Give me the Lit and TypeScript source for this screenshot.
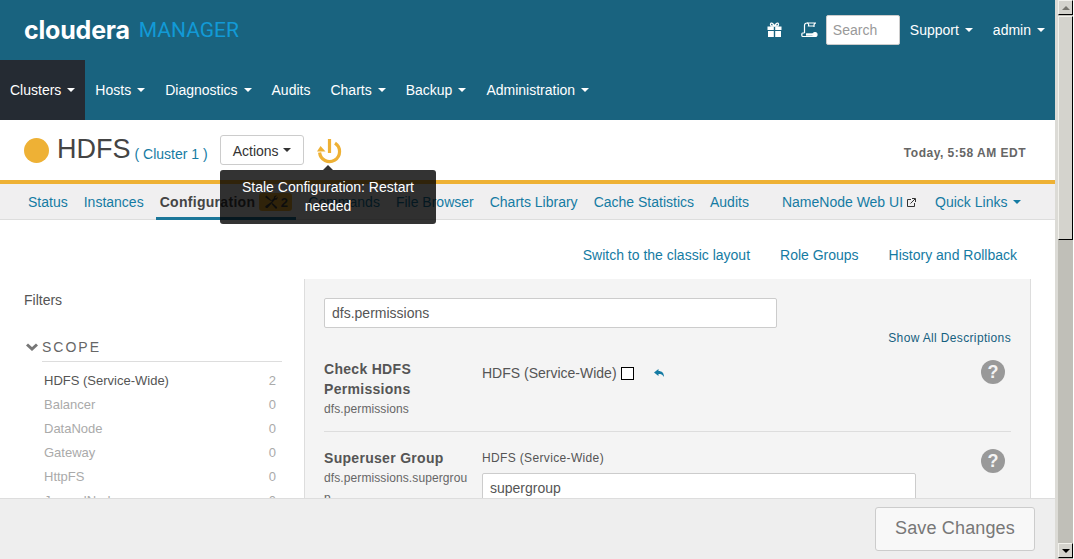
import { css, html, LitElement } from "lit";
import { customElement } from "lit/decorators.js";

const NAV = [
	{ label: "Clusters", caret: true, active: true },
	{ label: "Hosts", caret: true },
	{ label: "Diagnostics", caret: true },
	{ label: "Audits" },
	{ label: "Charts", caret: true },
	{ label: "Backup", caret: true },
	{ label: "Administration", caret: true },
];

const TABS = ["Commands", "File Browser", "Charts Library", "Cache Statistics", "Audits"];

const SCOPES = [
	["HDFS (Service-Wide)", "2"],
	["Balancer", "0"],
	["DataNode", "0"],
	["Gateway", "0"],
	["HttpFS", "0"],
	["JournalNode", "0"],
];

@customElement("app-root")
export class AppRoot extends LitElement {
	static override styles = css`
		:host {
			display: flex;
			height: 559px;
			overflow: hidden;
			font-family: "Liberation Sans", Arial, sans-serif;
			font-size: 14px;
			color: #555;
			background: #fff;
		}

		.page {
			flex: 1;
			min-width: 0;
			display: flex;
			flex-direction: column;
		}

		/* top header */
		.header {
			height: 120px;
			flex: none;
			background: #19637f;
			color: #fff;
			display: flex;
			flex-direction: column;
		}

		.brand-row {
			height: 60px;
			display: flex;
			align-items: center;
			padding: 0 10px 0 24px;
		}

		.logo {
			font-family: Inter, sans-serif;
			font-weight: 700;
			font-size: 25px;
			letter-spacing: -0.2px;
			color: #fff;
		}

		.logo-sub {
			font-family: Roboto, sans-serif;
			font-size: 21px;
			color: #129ad6;
			margin-left: 9px;
			letter-spacing: 0;
		}

		.util {
			margin-left: auto;
			display: flex;
			align-items: center;
		}

		.util svg {
			display: block;
		}

		.gift {
			margin-right: 19px;
		}

		.scroll-icon {
			margin-right: 8px;
		}

		.search {
			width: 74px;
			height: 30px;
			box-sizing: border-box;
			background: #fff;
			border: 1px solid #ccc;
			border-radius: 2px;
			padding: 0 6px;
			color: #999;
			display: flex;
			align-items: center;
			margin-right: 10px;
		}

		.util-link {
			display: flex;
			align-items: center;
		}

		.support {
			margin-right: 20px;
		}

		.caret {
			display: inline-block;
			width: 0;
			height: 0;
			margin-left: 6px;
			border-left: 4px solid transparent;
			border-right: 4px solid transparent;
			border-top: 4px solid currentColor;
		}

		.nav {
			height: 60px;
			display: flex;
		}

		.nav-item {
			padding: 0 10px;
			display: flex;
			align-items: center;
		}

		.nav-item.active {
			background: #252b33;
		}

		/* service title */
		.title-bar {
			height: 60px;
			flex: none;
			box-sizing: border-box;
			display: flex;
			align-items: center;
			padding: 0 29px 0 24px;
			position: relative;
		}

		.dot {
			width: 25px;
			height: 25px;
			border-radius: 50%;
			background: #eeb135;
			margin-right: 8px;
		}

		.service {
			font-size: 27px;
			color: #444;
			margin-right: 4px;
			margin-top: -2px;
		}

		.cluster {
			color: #157ba3;
			margin: 8px 12px 0 0;
		}

		.btn-actions {
			width: 84px;
			height: 30px;
			box-sizing: border-box;
			border: 1px solid #ccc;
			border-radius: 3px;
			background: #fff;
			color: #333;
			display: flex;
			align-items: center;
			justify-content: center;
			margin-right: 13px;
			padding-top: 2px;
		}

		.btn-actions .caret {
			margin-left: 4px;
			margin-top: -2px;
		}

		.power {
			display: block;
			margin-top: 3px;
		}

		.today {
			margin-left: auto;
			margin-top: 6px;
			font-size: 12px;
			font-weight: 700;
			color: #666;
			letter-spacing: 0.5px;
		}

		.tooltip {
			position: absolute;
			left: 220px;
			top: 50px;
			width: 216px;
			height: 54px;
			box-sizing: border-box;
			padding: 8px 16px;
			background: rgba(0, 0, 0, 0.8);
			border-radius: 3px;
			color: #fff;
			text-align: center;
			line-height: 19px;
			z-index: 5;
		}

		.tooltip::before {
			content: "";
			position: absolute;
			left: 103px;
			top: -5px;
			border-left: 5px solid transparent;
			border-right: 5px solid transparent;
			border-bottom: 5px solid rgba(0, 0, 0, 0.8);
		}

		/* tabs */
		.tabs {
			height: 40px;
			flex: none;
			box-sizing: border-box;
			border-top: 4px solid #eeb135;
			border-bottom: 1px solid #ddd;
			background: #f0eff0;
			display: flex;
			gap: 8px;
			padding-left: 24px;
			color: #157ba3;
		}

		.tab {
			padding: 0 4px;
			display: flex;
			align-items: center;
			box-sizing: border-box;
			height: 36px;
		}

		.tab.active {
			color: #444;
			font-weight: 700;
			letter-spacing: 0.3px;
			border-bottom: 3px solid #1b7699;
			padding-top: 3px;
		}

		.badge {
			margin-left: 4px;
			width: 33px;
			height: 18px;
			border-radius: 3px;
			background: #eeb135;
			color: #444;
			display: flex;
			align-items: center;
			justify-content: center;
			gap: 3px;
			font-size: 13px;
			letter-spacing: 0;
		}

		.tab-gap {
			margin-left: 17px;
		}

		.ext {
			margin-left: 4px;
			display: block;
		}

		.quick {
			margin-left: 3px;
		}

		/* body */
		.content {
			flex: 1;
			min-height: 0;
			overflow: hidden;
			display: flex;
			flex-direction: column;
		}

		.links {
			height: 59px;
			flex: none;
			display: flex;
			justify-content: flex-end;
			align-items: center;
			gap: 30px;
			padding: 10px 38px 0 0;
			box-sizing: border-box;
			color: #157ba3;
		}

		.columns {
			display: flex;
			padding-left: 24px;
		}

		.filters {
			width: 258px;
			margin-right: 22px;
			flex: none;
			padding-top: 12px;
		}

		.filters-title {
			color: #555;
			line-height: 18px;
		}

		.scope-head {
			margin-top: 26px;
			display: flex;
			align-items: center;
			height: 24px;
			color: #666;
			letter-spacing: 2px;
			font-size: 14px;
		}

		.scope-head svg {
			margin: 0 4px 0 2px;
		}

		.scope-list {
			margin-left: 18px;
			border-top: 1px solid #ddd;
			margin-top: 2px;
			padding: 6px 6px 0 2px;
		}

		.scope {
			height: 24px;
			display: flex;
			justify-content: space-between;
			align-items: center;
			font-size: 13px;
			color: #aaa;
		}

		.scope:first-child span:first-child {
			color: #555;
		}

		.panel {
			width: 727px;
			flex: none;
			box-sizing: border-box;
			background: #f4f4f4;
			border-left: 1px solid #ddd;
			border-right: 1px solid #ddd;
			padding: 19px 19px 0;
		}

		.input {
			height: 30px;
			box-sizing: border-box;
			border: 1px solid #ccc;
			border-radius: 2px;
			background: #fff;
			color: #555;
			padding: 0 7px;
			display: flex;
			align-items: center;
		}

		.filter-input {
			width: 453px;
		}

		.show-all {
			text-align: right;
			font-size: 12px;
			letter-spacing: 0.35px;
			color: #14607f;
			line-height: 16px;
			margin-top: 2px;
		}

		.row {
			display: grid;
			grid-template-columns: 146px 1fr 30px;
			column-gap: 12px;
			padding-top: 13px;
		}

		.row + .row {
			border-top: 1px solid #ddd;
			margin-top: 12px;
			padding-top: 16px;
		}

		.name {
			font-weight: 700;
			line-height: 20px;
			letter-spacing: 0.3px;
			color: #555;
		}

		.key {
			font-size: 12px;
			line-height: 20px;
			letter-spacing: 0.1px;
			color: #666;
			word-break: break-all;
		}

		.value {
			display: flex;
			align-items: center;
			height: 20px;
			margin-top: 4px;
		}

		.check {
			width: 13px;
			height: 13px;
			box-sizing: border-box;
			border: 1px solid #000;
			background: #fff;
			margin: 0 20px 0 4px;
		}

		.role {
			font-size: 12px;
			line-height: 20px;
			letter-spacing: 0.35px;
			color: #555;
			margin-bottom: 5px;
		}

		.value-input {
			width: 434px;
			height: 34px;
			padding-bottom: 4px;
		}

		.help {
			width: 24px;
			height: 24px;
			border-radius: 50%;
			background: #999;
			color: #f4f4f4;
			font-size: 18px;
			font-weight: 700;
			display: flex;
			align-items: center;
			justify-content: center;
			margin-top: 1px;
		}

		/* footer */
		.footer {
			height: 61px;
			flex: none;
			box-sizing: border-box;
			background: #eee;
			border-top: 1px solid #ddd;
			display: flex;
			justify-content: flex-end;
			align-items: flex-start;
			padding: 8px 20px 0 0;
		}

		.save {
			width: 160px;
			height: 44px;
			box-sizing: border-box;
			border: 1px solid #ccc;
			border-radius: 3px;
			background: #f8f8f8;
			color: #777;
			font-size: 18px;
			letter-spacing: 0.15px;
			display: flex;
			align-items: center;
			justify-content: center;
			padding-bottom: 2px;
		}

		/* browser scrollbar */
		.scrollbar {
			width: 19px;
			flex: none;
			box-sizing: border-box;
			background: #c0bfb8;
			border-left: 3px solid #dcdbd6;
			border-right: 1px solid #fff;
			display: flex;
			flex-direction: column;
		}

		.sb-btn {
			height: 15px;
			flex: none;
			box-sizing: border-box;
			background: #d4d3cd;
			border: 1px solid #f2f1ec;
			border-right-color: #000;
			border-bottom-color: #000;
			display: flex;
			align-items: center;
			justify-content: center;
		}

		.sb-up {
			border-left: 4px solid transparent;
			border-right: 4px solid transparent;
			border-bottom: 4px solid #77766f;
		}

		.sb-down {
			border-left: 4px solid transparent;
			border-right: 4px solid transparent;
			border-top: 4px solid #000;
		}

		.sb-thumb {
			height: 224px;
			flex: none;
			margin-top: 1px;
			box-sizing: border-box;
			background: #d4d3cd;
			border: 1px solid #f2f1ec;
			border-right-color: #000;
			border-bottom-color: #000;
		}

		.sb-track {
			flex: 1;
		}

		.sb-end {
			height: 1px;
			flex: none;
			background: #c0bfb8;
		}
	`;

	private renderHeader() {
		return html`
			<div class="header">
				<div class="brand-row">
					<span class="logo">cloudera</span>
					<span class="logo-sub">MANAGER</span>
					<div class="util">
						<svg class="gift" width="15" height="16" viewBox="0 0 15 16">
							<path d="M4 4C2.5 1.5 4.5 0 6 2L7.500 4L9 2C10.500 0 12.500 1.500 11 4Z" fill="none" stroke="#fff" stroke-width="1.300" />
							<path d="M0.500 4.500H6.800V8H0.500ZM8.200 4.500H14.500V8H8.200ZM1 9H6.800V15H1ZM8.200 9H14V15H8.200Z" fill="#fff" />
						</svg>
						<svg class="scroll-icon" width="17" height="16" viewBox="0 0 17 16" fill="none" stroke="#fff" stroke-width="1.200">
							<path d="M3.500 11V3.500C3.500 1.500 5 1 6 1H15C13.500 1 13 2 13 3.500V5" />
							<path d="M3.500 11H1.500C0.500 11 0.500 14.500 1.500 14.500H13" />
							<path d="M6 1C7.500 1 8 2.500 7.500 4H13" />
							<path d="M5 12.500H12" stroke-width="2.400" />
							<circle cx="14" cy="12.500" r="2" fill="#fff" />
						</svg>
						<div class="search">Search</div>
						<span class="util-link support">Support<i class="caret"></i></span>
						<span class="util-link">admin<i class="caret"></i></span>
					</div>
				</div>
				<div class="nav">
					${NAV.map(
						(n) => html`
							<div class="nav-item ${n.active ? "active" : ""}">
								${n.label}${n.caret ? html`<i class="caret"></i>` : ""}
							</div>
						`,
					)}
				</div>
			</div>
		`;
	}

	private renderTitle() {
		return html`
			<div class="title-bar">
				<span class="dot"></span>
				<span class="service">HDFS</span>
				<span class="cluster">( Cluster 1 )</span>
				<div class="btn-actions">Actions<i class="caret"></i></div>
				<svg class="power" width="26" height="27" viewBox="0 0 26 27" fill="none" stroke="#eeb135" stroke-width="3.200">
					<path d="M12.500 1V15" />
					<path d="M18 5.200A10 10 0 1 1 2.600 14.500" />
					<path d="M0 13.500L3.500 8L8.500 13.500Z" fill="#eeb135" stroke="none" />
				</svg>
				<span class="today">Today, 5:58 AM EDT</span>
				<div class="tooltip">Stale Configuration: Restart needed</div>
			</div>
		`;
	}

	private renderTabs() {
		return html`
			<div class="tabs">
				<span class="tab">Status</span>
				<span class="tab">Instances</span>
				<span class="tab active">
					Configuration
					<span class="badge">
						<svg width="14" height="14" viewBox="0 0 14 14" fill="#444">
							<path d="M1 2L2.500 0.500L6 4L7.500 5.500L10 3C9.500 1.500 11 0 13 0.500L11 2.500L12 3.500L13.500 1.500C14 4 12.500 5 11 4.800L4 12.500C3 14 0.500 12.500 1.500 11L8 6.500L6 5.500L3 3.500Z" />
							<path d="M8.500 8L13 12C13.500 13.500 12.500 14 11.500 13.500L7.500 9Z" />
						</svg>
						2
					</span>
				</span>
				${TABS.map((t) => html`<span class="tab">${t}</span>`)}
				<span class="tab tab-gap">
					NameNode Web UI
					<svg class="ext" width="9" height="9" viewBox="0 0 9 9" fill="none" stroke="#333">
						<path d="M4 1.500H0.500V8.500H7.500V5" />
						<path d="M3.500 5.500L8 1M5 0.500H8.500V4" />
					</svg>
				</span>
				<span class="tab quick">Quick Links<i class="caret"></i></span>
			</div>
		`;
	}

	private renderFilters() {
		return html`
			<div class="filters">
				<div class="filters-title">Filters</div>
				<div class="scope-head">
					<svg width="12" height="8" viewBox="0 0 12 8" fill="none" stroke="#777" stroke-width="3">
						<path d="M1 1.500L6 6L11 1.500" />
					</svg>
					SCOPE
				</div>
				<div class="scope-list">
					${SCOPES.map(
						([name, count]) => html`
							<div class="scope"><span>${name}</span><span>${count}</span></div>
						`,
					)}
				</div>
			</div>
		`;
	}

	private renderPanel() {
		return html`
			<div class="panel">
				<div class="input filter-input">dfs.permissions</div>
				<div class="show-all">Show All Descriptions</div>
				<div class="row">
					<div>
						<div class="name">Check HDFS Permissions</div>
						<div class="key">dfs.permissions</div>
					</div>
					<div class="value">
						HDFS (Service-Wide)
						<span class="check"></span>
						<svg width="10" height="8" viewBox="0 0 10 8" fill="#157ba3">
							<path d="M0 3.500L4.500 0V2C8 2 10 4 10 8C8.500 5.500 7 5 4.500 5V7Z" />
						</svg>
					</div>
					<div class="help">?</div>
				</div>
				<div class="row">
					<div>
						<div class="name">Superuser Group</div>
						<div class="key">dfs.permissions.supergroup</div>
					</div>
					<div>
						<div class="role">HDFS (Service-Wide)</div>
						<div class="input value-input">supergroup</div>
					</div>
					<div class="help">?</div>
				</div>
			</div>
		`;
	}

	override render() {
		return html`
			<div class="page">
				${this.renderHeader()} ${this.renderTitle()} ${this.renderTabs()}
				<div class="content">
					<div class="links">
						<span>Switch to the classic layout</span>
						<span>Role Groups</span>
						<span>History and Rollback</span>
					</div>
					<div class="columns">${this.renderFilters()} ${this.renderPanel()}</div>
				</div>
				<div class="footer"><div class="save">Save Changes</div></div>
			</div>
			<div class="scrollbar">
				<div class="sb-btn"><i class="sb-up"></i></div>
				<div class="sb-thumb"></div>
				<div class="sb-track"></div>
				<div class="sb-btn"><i class="sb-down"></i></div>
				<div class="sb-end"></div>
			</div>
		`;
	}
}

declare global {
	interface HTMLElementTagNameMap {
		"app-root": AppRoot;
	}
}
